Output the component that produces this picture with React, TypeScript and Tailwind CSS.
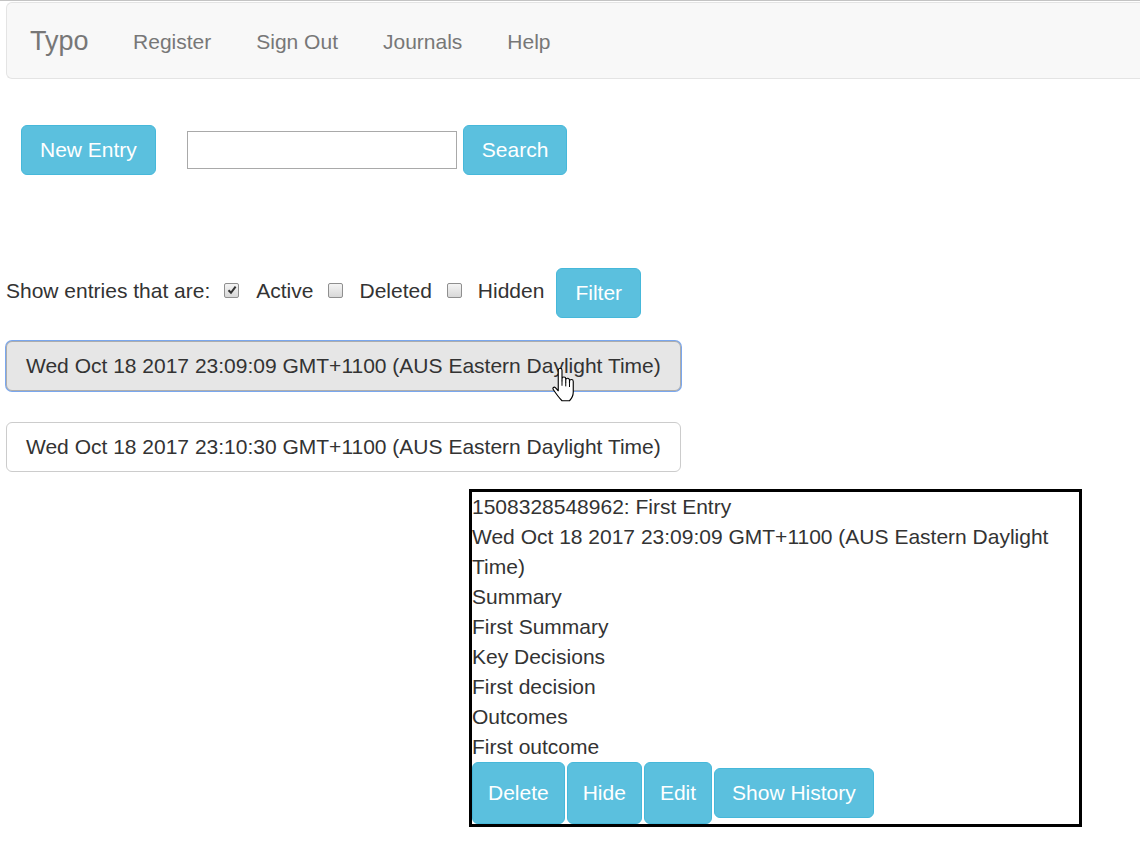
import React from "react";

const navLinks = ["Register", "Sign Out", "Journals", "Help"];

const entries = [
	"Wed Oct 18 2017 23:09:09 GMT+1100 (AUS Eastern Daylight Time)",
	"Wed Oct 18 2017 23:10:30 GMT+1100 (AUS Eastern Daylight Time)",
];

const detailLines = [
	"1508328548962: First Entry",
	"Wed Oct 18 2017 23:09:09 GMT+1100 (AUS Eastern Daylight Time)",
	"Summary",
	"First Summary",
	"Key Decisions",
	"First decision",
	"Outcomes",
	"First outcome",
];

function Checkbox({ checked }: { checked?: boolean }) {
	return (
		<span className="flex h-[15px] w-[15px] items-center justify-center rounded-[2px] border border-[#8f8f8f] bg-gradient-to-b from-[#f4f4f4] to-[#d8d8d8]">
			{checked && (
				<svg width="10" height="10" viewBox="0 0 10 10">
					<path d="M1.5 5.2 L4 7.8 L8.6 1.6" fill="none" stroke="#333" strokeWidth="2" />
				</svg>
			)}
		</span>
	);
}

function HandCursor() {
	return (
		<svg
			className="absolute left-[552px] top-[366px]"
			width="25"
			height="35"
			viewBox="0 0 20 28"
		>
			<path
				d="M5 2.5 a1.5 1.5 0 0 1 3 0 V11 V9.5 a1.5 1.5 0 0 1 3 0 V12 V10.5 a1.5 1.5 0 0 1 3 0 V13 V11.5 a1.5 1.5 0 0 1 3 0 V20 c0 3 -2 6 -3 7 H8 c-2 -2 -5 -6 -7 -9 c-0.8 -1.2 0.6 -2.5 1.7 -1.5 L5 19 Z"
				fill="#fff"
				stroke="#000"
				strokeWidth="0.9"
				strokeLinejoin="round"
			/>
			<path d="M8 11 V15 M11 12 V15.5 M14 13 V16" stroke="#000" strokeWidth="0.8" />
		</svg>
	);
}

const infoBtn =
	"rounded-[6px] border border-[#46b8da] bg-[#5bc0de] px-[18px] py-[9px] leading-[30px] text-white";

export default function App() {
	return (
		<div className="relative min-h-[852px] overflow-hidden border-t border-[#c4c4c4] bg-white font-['Liberation_Sans',Arial,sans-serif] text-[21px] leading-[30px] text-[#333]">
			{/* navbar */}
			<div className="ml-[6px] mt-px flex h-[77px] items-center rounded-l-[6px] border border-r-0 border-[#e4e4e4] bg-[#f8f8f8]">
				<span className="pl-[23px] pr-[22px] text-[27px] text-[#777]">Typo</span>
				{navLinks.map((link) => (
					<span key={link} className="px-[22.5px] pt-[2px] text-[#777]">
						{link}
					</span>
				))}
			</div>

			{/* new entry + search */}
			<div className="ml-[21px] mt-[46px] flex items-center">
				<button className={infoBtn}>New Entry</button>
				<input
					className="ml-[31px] h-[38px] w-[270px] border border-[#a9a9a9] bg-white px-1"
					type="text"
				/>
				<button className={`ml-[6px] ${infoBtn}`}>Search</button>
			</div>

			{/* filter */}
			<div className="ml-[6px] mt-[93px] flex items-center">
				<span className="mb-[4px]">Show entries that are:</span>
				<span className="mb-[6px] ml-[14px]">
					<Checkbox checked />
				</span>
				<span className="mb-[4px] ml-[17px]">Active</span>
				<span className="mb-[6px] ml-[15px]">
					<Checkbox />
				</span>
				<span className="mb-[4px] ml-[16px]">Deleted</span>
				<span className="mb-[6px] ml-[15px]">
					<Checkbox />
				</span>
				<span className="mb-[4px] ml-[16px]">Hidden</span>
				<button className={`ml-[12px] ${infoBtn}`}>Filter</button>
			</div>

			{/* entries */}
			<div className="ml-[6px] mt-[23px] flex flex-col items-start gap-[31px]">
				{entries.map((entry, i) => (
					<button
						key={entry}
						className={
							i === 0
								? "rounded-[6px] border border-[#adadad] bg-[#e6e6e6] px-[19px] py-[9px] leading-[30px] text-[#333] shadow-[0_0_0_1px_#7aa7ee]"
								: "rounded-[6px] border border-[#ccc] bg-white px-[19px] py-[9px] leading-[30px] text-[#333]"
						}
					>
						{entry}
					</button>
				))}
			</div>

			{/* entry detail */}
			<div className="ml-[469px] mt-[17px] w-[613px] border-[3px] border-black">
				{detailLines.map((line, i) => (
					<div key={i}>{line}</div>
				))}
				<div className="flex items-center gap-[2px]">
					{["Delete", "Hide", "Edit"].map((label) => (
						<button
							key={label}
							className="rounded-[6px] border border-[#46b8da] bg-[#5bc0de] px-[15px] py-[15px] leading-[30px] text-white"
						>
							{label}
						</button>
					))}
					<button className="rounded-[6px] border border-[#46b8da] bg-[#5bc0de] px-[17px] py-[9px] leading-[30px] text-white">
						Show History
					</button>
				</div>
			</div>

			<HandCursor />
		</div>
	);
}
